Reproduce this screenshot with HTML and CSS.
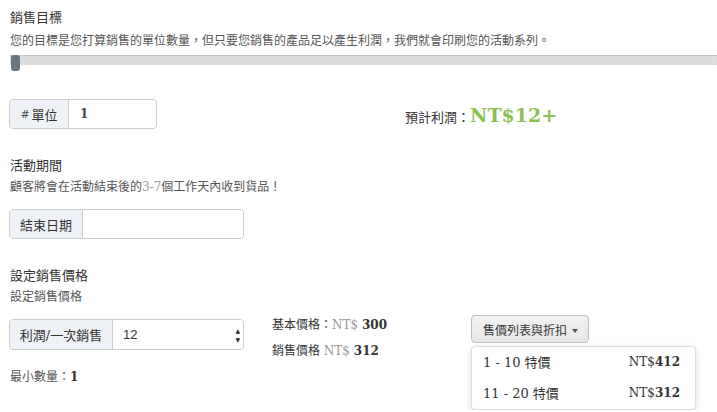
FILE: index.html
```html
<!DOCTYPE html>
<html>
<head>
    <meta charset="utf-8">
    <title>campaign goal</title>
    <link rel="stylesheet" href="styles.css">
</head>
<body>
<div class="page">
    <h3 class="title first">銷售目標</h3>
    <p class="desc">您的目標是您打算銷售的單位數量，但只要您銷售的產品足以產生利潤，我們就會印刷您的活動系列。</p>

    <div class="slider">
        <div class="track"></div>
        <div class="handle"></div>
    </div>

    <div class="goal-row">
        <div class="input-group units">
            <span class="addon"><span class="hash">#</span>單位</span>
            <input type="text" class="field bold" value="1">
        </div>
        <div class="profit">預計利潤：<span class="profit-value">NT$12+</span></div>
    </div>

    <h3 class="title">活動期間</h3>
    <p class="desc tight">顧客將會在活動結束後的<span class="muted">3-7</span>個工作天內收到貨品！</p>

    <div class="input-group date">
        <span class="addon">結束日期</span>
        <input type="text" class="field" value="">
    </div>

    <h3 class="title">設定銷售價格</h3>
    <p class="desc tight">設定銷售價格</p>

    <div class="price-row">
        <div class="col-left">
            <div class="input-group price">
                <span class="addon">利潤/一次銷售</span>
                <div class="field number">
                    <span class="num">12</span>
                    <span class="spin"><span>&#9650;</span><span>&#9660;</span></span>
                </div>
            </div>
            <p class="min-qty">最小數量：<b>1</b></p>
        </div>

        <div class="col-mid">
            <p class="price-line">基本價格：<span class="muted">NT$</span> <b>300</b></p>
            <p class="price-line second">銷售價格 <span class="muted">NT$</span> <b>312</b></p>
        </div>

        <div class="col-right">
            <button class="btn-drop">售價列表與折扣 <span class="caret"></span></button>
            <ul class="menu">
                <li><span>1 - 10 特價</span><span class="amount">NT$<b>412</b></span></li>
                <li><span>11 - 20 特價</span><span class="amount">NT$<b>312</b></span></li>
            </ul>
        </div>
    </div>
</div>
</body>
</html>
```

FILE: styles.css
```css
* {
    box-sizing: border-box;
}

body {
    margin: 0;
    background: #fff;
    color: #333;
    font-family: "DejaVu Serif", "Noto Sans CJK TC", serif;
    font-size: 12px;
    overflow: hidden;
}

.page {
    padding-left: 9px;
}

p {
    margin: 0;
}

/* Section headings */
.title {
    margin: 27px 0 0 1px;
    font-size: 13px;
    font-weight: normal;
    line-height: 20px;
    color: #333;
}

.title.first {
    margin-top: 8px;
}

.desc {
    margin: 3px 0 0 1px;
    font-size: 12px;
    line-height: 20px;
    color: #555;
}

.desc.tight {
    margin-top: 1px;
}

.muted {
    color: #999;
}

/* Slider */
.slider {
    position: relative;
    margin-top: 4px;
    height: 16px;
}

.track {
    margin: 3px 0 0 1px;
    height: 10px;
    background: #dddddd;
    box-shadow: inset 0 1px 1px rgba(0, 0, 0, 0.12);
}

.handle {
    position: absolute;
    left: 2px;
    top: 0;
    width: 9px;
    height: 16px;
    border-radius: 3px;
    background: #6c757b;
}

/* Input groups */
.input-group {
    display: flex;
    height: 30px;
    border: 1px solid #ccc;
    border-radius: 4px;
    overflow: hidden;
    background: #fff;
}

.addon {
    display: flex;
    align-items: center;
    justify-content: center;
    background: #eef1f6;
    border-right: 1px solid #ccc;
    font-size: 13px;
    color: #333;
}

.hash {
    font-size: 11px;
    color: #555;
    margin-right: 2px;
}

.field {
    flex: 1;
    min-width: 0;
    border: none;
    outline: none;
    padding: 0 11px;
    font-family: "DejaVu Serif", serif;
    font-size: 12px;
    color: #444;
    background: #fff;
}

.field.bold {
    font-weight: bold;
}

.units {
    width: 148px;
}

.units .addon {
    width: 59px;
}

.date {
    width: 235px;
    margin-top: 12px;
}

.date .addon {
    width: 73px;
}

.price {
    width: 235px;
    height: 31px;
    margin-top: 4px;
}

.price .addon {
    width: 103px;
}

.number {
    display: flex;
    align-items: center;
    justify-content: space-between;
    padding: 0 3px 0 10px;
}

.num {
    font-family: "Liberation Sans", sans-serif;
    font-size: 13px;
    color: #333;
}

.spin {
    display: flex;
    flex-direction: column;
    font-size: 6px;
    line-height: 9px;
    color: #222;
}

/* Goal row */
.goal-row {
    display: flex;
    align-items: center;
    margin-top: 28px;
}

.profit {
    margin-left: 248px;
    padding-top: 2px;
    font-size: 13px;
    color: #333;
}

.profit-value {
    font-family: "DejaVu Serif", serif;
    font-weight: bold;
    font-size: 19px;
    color: #8cc152;
}

/* Price row */
.price-row {
    display: flex;
    align-items: flex-start;
    margin-top: 8px;
}

.col-left {
    width: 235px;
}

.min-qty {
    margin: 17px 0 0 1px;
    line-height: 20px;
    color: #555;
}

.min-qty b {
    color: #333;
}

.col-mid {
    width: 199px;
    margin-left: 28px;
}

.price-line {
    line-height: 20px;
    color: #333;
}

.price-line.second {
    margin-top: 6px;
}

.col-right {
    width: 225px;
}

.btn-drop {
    height: 28px;
    padding: 0 10px 0 11px;
    border: 1px solid #bdbdbd;
    border-radius: 4px;
    background: linear-gradient(#f2f2f2, #e6e6e6);
    font-family: "Noto Sans CJK TC", sans-serif;
    font-size: 12px;
    color: #333;
}

.caret {
    display: inline-block;
    margin-left: 2px;
    vertical-align: middle;
    border-top: 4px solid #555;
    border-left: 3px solid transparent;
    border-right: 3px solid transparent;
}

.menu {
    list-style: none;
    margin: 3px 0 0 0;
    padding: 0;
    border: 1px solid #ddd;
    border-radius: 4px;
    background: #fff;
    box-shadow: 0 2px 6px rgba(0, 0, 0, 0.15);
}

.menu li {
    display: flex;
    justify-content: space-between;
    height: 31px;
    line-height: 31px;
    padding: 0 15px 0 11px;
    font-size: 13px;
    color: #333;
}

.amount {
    font-size: 12px;
}
```
